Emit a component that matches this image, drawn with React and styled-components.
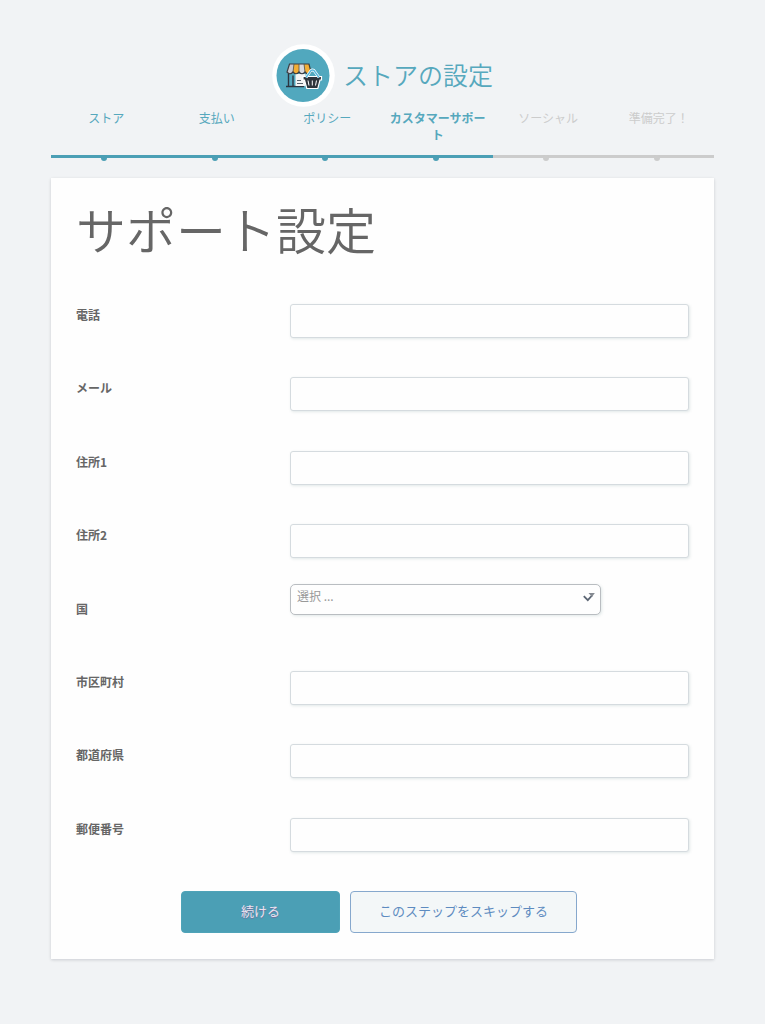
import React, {useState} from "react";
import styled, {createGlobalStyle} from "styled-components";

const theme = {
    teal: "#4b9fb5",
    tealText: "#56a8bd",
    gray: "#cccccc",
    text: "#666666",
    page: "#f1f3f5",
    blue: "#5d8bc0",
};

const GlobalStyle = createGlobalStyle`
    * {
        box-sizing: border-box;
    }

    body {
        margin: 0;
        background-color: ${theme.page};
        color: ${theme.text};
        font-family: "Noto Sans CJK JP", "Noto Sans", sans-serif;
    }

    button, input, select {
        font-family: inherit;
    }
`;

const Page = styled.div`
    padding: 44px 51px 64px;
`;

const Header = styled.header`
    display: flex;
    align-items: center;
    justify-content: center;
    gap: 8px;
    height: 63px;
`;

const Title = styled.h1`
    margin: 0;
    padding-bottom: 4px;
    color: ${theme.tealText};
    font-size: 25px;
    line-height: 36px;
    font-weight: 350;
`;

const Steps = styled.ol`
    display: grid;
    grid-template-columns: repeat(6, 1fr);
    margin: 0 0 20px;
    padding: 0;
    list-style: none;
`;

const StepItem = styled.li`
    position: relative;
    min-height: 51px;
    padding: 2px 5px 12px;
    border-bottom: 3px solid ${props => props.$done ? theme.teal : theme.gray};
    color: ${props => props.$done ? theme.tealText : theme.gray};
    font-size: 12px;
    line-height: 17px;
    font-weight: ${props => props.$current ? 700 : 400};
    text-align: center;

    &::after {
        content: "";
        position: absolute;
        bottom: -6px;
        left: calc(50% - 5px);
        width: 6px;
        height: 6px;
        border-radius: 50%;
        background-color: ${props => props.$done ? theme.teal : theme.gray};
    }
`;

const Card = styled.main`
    padding: 14px 25px 26px;
    background-color: #fefefe;
    box-shadow: 0 1px 3px rgba(0, 0, 30, 0.16);
`;

const Heading = styled.h2`
    margin: 0 0 26px;
    font-size: 50px;
    line-height: 72px;
    font-weight: 350;
`;

const Fields = styled.div`
    display: grid;
    grid-auto-rows: 1fr;
    min-height: 587px;
`;

const Row = styled.div`
    display: grid;
    grid-template-columns: 214px 1fr;
    align-items: start;
`;

const Label = styled.label`
    padding-top: 16px;
    font-size: 12px;
    line-height: 18px;
    font-weight: 700;
`;

const Input = styled.input`
    width: 100%;
    height: 34px;
    margin-top: 14px;
    padding: 0 8px;
    border: 1px solid #d5dbdf;
    border-radius: 3px;
    background-color: #fefefe;
    box-shadow: 1px 1px 3px rgba(60, 110, 110, 0.15);
    color: ${theme.text};
    font-size: 13px;
`;

const SelectWrap = styled.div`
    position: relative;
    width: 78%;
`;

const Select = styled.select`
    appearance: none;
    display: block;
    width: 100%;
    height: 31px;
    padding: 0 30px 8px 6px;
    border: 1px solid #b9bdc1;
    border-radius: 5px;
    background-color: #fefefe;
    box-shadow: 1px 1px 3px rgba(60, 110, 110, 0.15);
    color: #999999;
    font-size: 12px;
`;

const Arrow = styled.svg`
    position: absolute;
    top: 7px;
    right: 6px;
    pointer-events: none;
`;

const Actions = styled.div`
    display: flex;
    justify-content: center;
    gap: 10px;
    margin-top: 14px;
    padding-right: 7px;
`;

const Button = styled.button`
    height: 42px;
    padding: 0 ${props => props.$primary ? 59 : 28}px 4px;
    border: 1px solid ${props => props.$primary ? "#4fa3b8" : "#86a8cd"};
    border-radius: 4px;
    background-color: ${props => props.$primary ? theme.teal : "#f3f7f8"};
    color: ${props => props.$primary ? "#eee3f0" : theme.blue};
    text-shadow: ${props => props.$primary ? "0 1px 1px #6d6d9c" : "none"};
    font-size: 13px;
    cursor: pointer;
`;

const Logo = () => (
    <svg width="63" height="63" viewBox="0 0 63 63" aria-hidden="true">
        <circle cx="31.5" cy="31.5" r="31.3" fill="#ffffff" />
        <circle cx="31" cy="31.5" r="26.5" fill="#51a8be" />
        <path d="M16.5 30v12M14 42.5h18M21 42.5V31.5" fill="none" stroke="#2c3540" strokeWidth="1.4" />
        <path d="M23.5 30h10v12h-10z" fill="#f4f4f4" />
        <path d="M25 36.5h4M25 39.5h6" stroke="#59636d" strokeWidth="1" />
        <path d="M17.5 20h4.5l-1 8q-3 3.5-6 0z" fill="#cbcbd1" />
        <path d="M22 20h5v8q-3 3.5-6 0z" fill="#f3ae35" />
        <path d="M27 20h5l1 8q-3 3.5-6 0z" fill="#dadade" />
        <path d="M32 20h5l2 8q-3 3.5-6 0z" fill="#f3ae35" />
        <path d="M17.5 20H37l2 8q-3 3.5-6 0q-3 3.5-6 0q-3 3.5-6 0q-3 3.5-6 0z" fill="none" stroke="#3b3d42" strokeWidth="1.2" />
        <path d="M22 20l-1 8M27 20v8M32 20l1 8" stroke="#54504a" strokeWidth=".8" />
        <path d="M31 32.5h18.5V36H48l-2.2 8.5H34.8L32.5 36H31z" fill="#2f353c" stroke="#ffffff" strokeWidth="1.2" />
        <path d="M36 36.5l1 5M40.3 36.5v5M44.5 36.5l-1 5" stroke="#ffffff" strokeWidth="1" />
        <path d="M34 33.5l5-7q1.5-1 3 0l5 7" fill="none" stroke="#ffffff" strokeWidth="2.8" />
        <path d="M34 33.5l5-7q1.5-1 3 0l5 7" fill="none" stroke="#55b6dc" strokeWidth="1.4" />
    </svg>
);

const steps = ["ストア", "支払い", "ポリシー", "カスタマーサポート", "ソーシャル", "準備完了！"];
const currentStep = 3;

const fields = [
    {name: "phone", label: "電話", type: "tel"},
    {name: "email", label: "メール", type: "email"},
    {name: "address1", label: "住所1"},
    {name: "address2", label: "住所2"},
    {name: "country", label: "国", type: "select"},
    {name: "city", label: "市区町村"},
    {name: "state", label: "都道府県"},
    {name: "zip", label: "郵便番号"},
];

const Field = ({field, value, onChange}) => (
    <Row>
        <Label htmlFor={field.name}>{field.label}</Label>
        {field.type === "select" ? (
            <SelectWrap>
                <Select id={field.name} value={value} onChange={onChange}>
                    <option value="">選択 ...</option>
                </Select>
                <Arrow width="12" height="12" viewBox="0 0 12 12" aria-hidden="true">
                    <path d="M.8 5.2L4.8 9.2 9 4.5" fill="none" stroke="#5b6573" strokeWidth="1.8" />
                    <path d="M5.5 2H11.8L9 6z" fill="#858a91" />
                </Arrow>
            </SelectWrap>
        ) : (
            <Input id={field.name} type={field.type || "text"} value={value} onChange={onChange} />
        )}
    </Row>
);

const App = () => {
    const [values, setValues] = useState({});

    const setValue = (name, value) => {
        setValues({...values, [name]: value});
    };

    return (
        <Page>
            <GlobalStyle />
            <Header>
                <Logo />
                <Title>ストアの設定</Title>
            </Header>
            <Steps>
                {steps.map((step, i) => (
                    <StepItem
                        key={step}
                        $done={i <= currentStep}
                        $current={i === currentStep}
                        aria-current={i === currentStep ? "step" : undefined}
                    >
                        {step}
                    </StepItem>
                ))}
            </Steps>
            <Card>
                <Heading>サポート設定</Heading>
                <form onSubmit={(e) => e.preventDefault()}>
                    <Fields>
                        {fields.map((field) => (
                            <Field
                                key={field.name}
                                field={field}
                                value={values[field.name] || ""}
                                onChange={(e) => setValue(field.name, e.target.value)}
                            />
                        ))}
                    </Fields>
                    <Actions>
                        <Button type="submit" $primary>続ける</Button>
                        <Button type="button">このステップをスキップする</Button>
                    </Actions>
                </form>
            </Card>
        </Page>
    );
};

export default App;
